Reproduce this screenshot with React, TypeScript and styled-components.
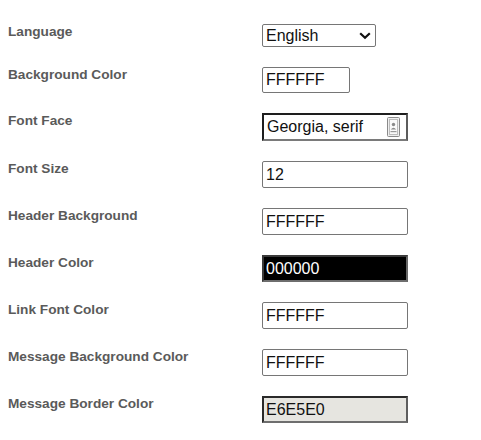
import React from "react";
import styled, { createGlobalStyle, css } from "styled-components";

const Global = createGlobalStyle`
  html, body { margin: 0; padding: 0; background: #ffffff; }
  body { font-family: "Liberation Sans", Arial, sans-serif; }
`;

const Form = styled.div`
  display: grid;
  grid-template-columns: 254px auto;
  row-gap: 20px;
  padding: 24px 0 0 8px;
  align-items: start;
`;

const Label = styled.label`
  font-family: "Liberation Sans", Arial, sans-serif;
  font-weight: bold;
  font-size: 13.65px;
  line-height: 16px;
  color: #5a5a5a;
`;

type Variant = "plain" | "dark" | "grey" | "inset";

const variantCss: Record<Variant, ReturnType<typeof css>> = {
  plain: css`
    border: 1px solid #767676;
    border-radius: 2px;
    background: #ffffff;
    color: #111;
    padding: 0 3px;
  `,
  inset: css`
    border: 2px solid;
    border-color: #1e1e1e #5c5c5c #7a7a7a #1e1e1e;
    background: #ffffff;
    color: #111;
    padding: 0 3px;
  `,
  dark: css`
    border: 2px solid;
    border-color: #3a3a3a #666 #6e6e6e #3a3a3a;
    background: #000000;
    color: #ffffff;
    padding: 0 2px;
  `,
  grey: css`
    border: 2px solid;
    border-color: #2a2a2a #5e5e5e #6e6e6e #2a2a2a;
    background: #e6e5e0;
    color: #111;
    padding: 0 2px;
  `,
};

const Field = styled.input<{ $w: number; $h?: number; $variant: Variant }>`
  box-sizing: border-box;
  width: ${(p) => p.$w}px;
  height: ${(p) => p.$h ?? 27}px;
  margin: 0;
  font-family: "Liberation Sans", Arial, sans-serif;
  font-size: 16px;
  outline: none;
  ${(p) => variantCss[p.$variant]}
`;

const SelectWrap = styled.div`
  position: relative;
  width: 114px;
  height: 23px;
`;

const Select = styled.select`
  appearance: none;
  -webkit-appearance: none;
  box-sizing: border-box;
  width: 114px;
  height: 23px;
  margin: 0;
  padding: 0 3px;
  border: 1px solid #767676;
  border-radius: 2px;
  background: #ffffff;
  color: #111;
  font-family: "Liberation Sans", Arial, sans-serif;
  font-size: 16px;
  outline: none;
`;

const Chevron = styled.svg`
  position: absolute;
  right: 5px;
  top: 8px;
  pointer-events: none;
`;

const FieldWrap = styled.div`
  position: relative;
  width: 146px;
`;

const ContactIcon = styled.svg`
  position: absolute;
  right: 8px;
  top: 4px;
  pointer-events: none;
`;

const rows: { label: string; value: string; variant: Variant }[] = [
  { label: "Font Size", value: "12", variant: "plain" },
  { label: "Header Background", value: "FFFFFF", variant: "plain" },
  { label: "Header Color", value: "000000", variant: "dark" },
  { label: "Link Font Color", value: "FFFFFF", variant: "plain" },
  { label: "Message Background Color", value: "FFFFFF", variant: "plain" },
  { label: "Message Border Color", value: "E6E5E0", variant: "grey" },
];

export default function App() {
  return (
    <>
      <Global />
      <Form>
        <Label>Language</Label>
        <SelectWrap>
          <Select defaultValue="en">
            <option value="en">English</option>
          </Select>
          <Chevron width="12" height="8" viewBox="0 0 12 8">
            <path d="M1.2 1.2 L6 5.8 L10.8 1.2" fill="none" stroke="#111" strokeWidth="2.2" />
          </Chevron>
        </SelectWrap>

        <Label>Background Color</Label>
        <Field $w={88} $h={26} $variant="plain" defaultValue="FFFFFF" />

        <Label>Font Face</Label>
        <FieldWrap>
          <Field $w={146} $h={28} $variant="inset" defaultValue="Georgia, serif" />
          <ContactIcon width="13" height="20" viewBox="0 0 13 20">
            <rect x="0.5" y="0.5" width="12" height="19" rx="1" fill="#eeeeee" stroke="#8a8a8a" />
            <rect x="2.5" y="2.5" width="8" height="15" fill="#fafafa" stroke="#bdbdbd" />
            <circle cx="6.5" cy="7.5" r="1.7" fill="#8a8a8a" />
            <path d="M3.8 12.5 Q6.5 9.2 9.2 12.5 Z" fill="#8a8a8a" />
            <rect x="3.5" y="14" width="6" height="1.2" fill="#9a9a9a" />
          </ContactIcon>
        </FieldWrap>

        {rows.map((r) => (
          <React.Fragment key={r.label}>
            <Label>{r.label}</Label>
            <Field $w={146} $variant={r.variant} defaultValue={r.value} />
          </React.Fragment>
        ))}
      </Form>
    </>
  );
}
